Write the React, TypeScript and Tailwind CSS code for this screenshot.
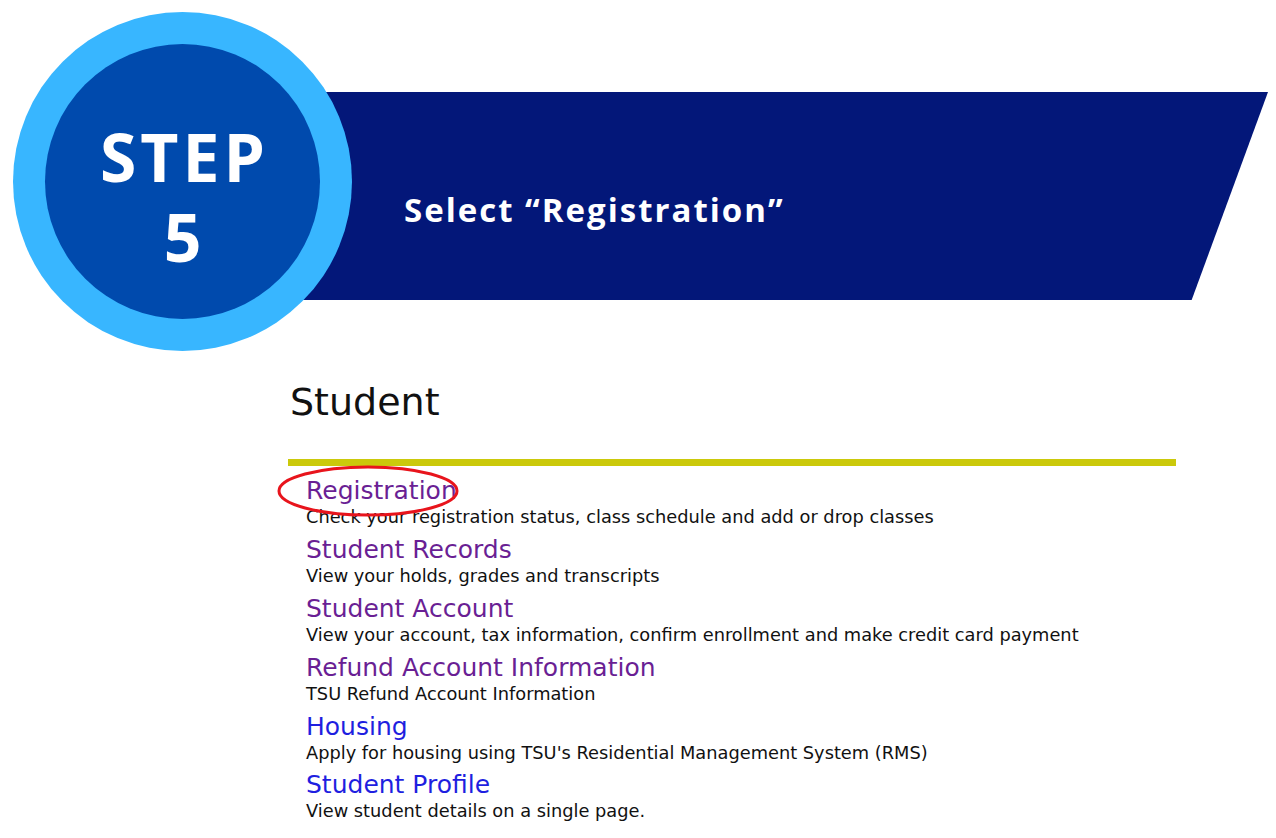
import React from 'react';

const links = [
  { label: 'Registration', desc: 'Check your registration status, class schedule and add or drop classes', visited: true },
  { label: 'Student Records', desc: 'View your holds, grades and transcripts', visited: true },
  { label: 'Student Account', desc: 'View your account, tax information, confirm enrollment and make credit card payment', visited: true },
  { label: 'Refund Account Information', desc: 'TSU Refund Account Information', visited: true },
  { label: 'Housing', desc: "Apply for housing using TSU's Residential Management System (RMS)", visited: false },
  { label: 'Student Profile', desc: 'View student details on a single page.', visited: false },
];

export default function App() {
  return (
    <div className="w-[1276px] h-[838px] bg-white overflow-hidden">
      {/* Step header */}
      <div className="relative h-[362px]">
        <div className="ml-[250px] pt-[92px]">
          <div className="w-[1018px] h-[208px] bg-[#031779] [clip-path:polygon(0_0,100%_0,92.5%_100%,0_100%)] flex items-center pl-[154px]">
            <span className="font-['Open_Sans',sans-serif] font-bold text-white text-[33px] tracking-[2px] mt-[28px]">
              Select “Registration”
            </span>
          </div>
        </div>
        <div className="absolute left-[13px] top-[12px] w-[339px] h-[339px] rounded-full bg-[#38b6ff] flex items-center justify-center">
          <div className="w-[275px] h-[275px] rounded-full bg-[#004aad] flex flex-col items-center justify-center pt-[28px] font-['Open_Sans',sans-serif] font-bold text-white">
            <span className="text-[66px] leading-[80px] tracking-[4px] pl-[4px]">STEP</span>
            <span className="text-[66px] leading-[80px]">5</span>
          </div>
        </div>
      </div>

      {/* Student menu */}
      <div className="ml-[288px] w-[888px] pt-[17px] font-['DejaVu_Sans',Verdana,sans-serif]">
        <h1 className="text-[38px] leading-[46px] text-[#111] pl-[2px]">Student</h1>
        <div className="mt-[34px] h-[7px] bg-[#cbc90b]" />
        <ul className="mt-[9px] pl-[18px]">
          {links.map((l, i) => (
            <li key={l.label} className="relative h-[58.9px]">
              <a
                href="#"
                className={`block text-[25px] leading-[32px] ${l.visited ? 'text-[#6a1f94]' : 'text-[#1f1fe0]'}`}
              >
                {l.label}
              </a>
              <p className="text-[17.8px] leading-[24px] text-[#111] -mt-[2px]">{l.desc}</p>
              {i === 0 && (
                <svg className="absolute left-[-30px] top-[-10px]" width="186" height="54" viewBox="0 0 186 54">
                  <ellipse cx="92" cy="26" rx="89" ry="24" fill="none" stroke="#e8141c" strokeWidth="3" />
                </svg>
              )}
            </li>
          ))}
        </ul>
      </div>
    </div>
  );
}
